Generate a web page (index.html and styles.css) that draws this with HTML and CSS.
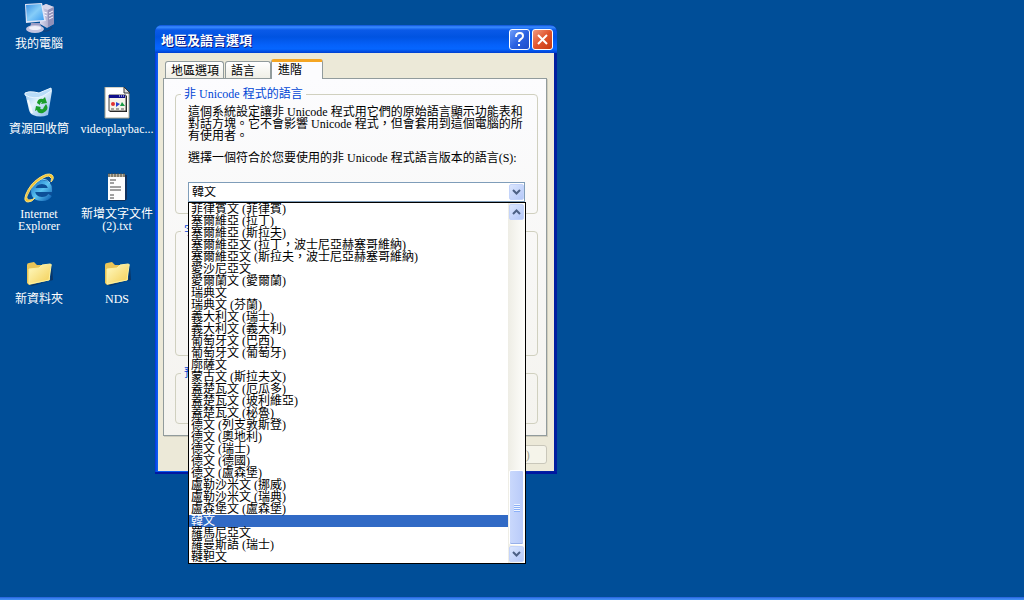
FILE: index.html
```html
<!DOCTYPE html>
<html lang="zh-Hant">
<head>
<meta charset="utf-8">
<title>地區及語言選項</title>
<link rel="stylesheet" href="styles.css">
</head>
<body>
<main class="desktop">
  <nav class="shortcuts" aria-label="桌面">
    <a class="shortcut" href="#computer">
      <svg class="shortcut-icon" viewBox="0 0 32 32" aria-hidden="true">
        <defs>
          <linearGradient id="screen" x1="0" y1="0" x2="1" y2="1"><stop offset="0" stop-color="#3a90e4"/><stop offset=".5" stop-color="#86cdf8"/><stop offset="1" stop-color="#3d9cf0"/></linearGradient>
          <linearGradient id="case" x1="0" y1="0" x2="1" y2="0"><stop offset="0" stop-color="#dcdcf0"/><stop offset="1" stop-color="#8c8cb4"/></linearGradient>
        </defs>
        <path d="M17 5l6-3 8 3v17l-7 4-7-4z" fill="url(#case)"/>
        <path d="M17 5l6-3 8 3-6 3z" fill="#d6d6ea"/>
        <path d="M25 8l6-3v17l-6 3z" fill="#9090b8"/>
        <path d="M21 10l3 1M21 13l3 1M26 11l4-2M26 14l4-2M26 17l4-2" stroke="#f4f4ff" stroke-width="1"/>
        <path d="M2 2l17-1 4 18-20 2z" fill="#dfe4f6"/>
        <path d="M3 3l15-1 3 16-17 1z" fill="url(#screen)"/>
        <path d="M8 21h9l2 6H7z" fill="#9c9cc4"/>
        <ellipse cx="12" cy="27" rx="9" ry="4" fill="#c4c4e0"/>
        <ellipse cx="12" cy="26" rx="6" ry="2" fill="#f0f0fa"/>
        <path d="M20 29q7 1 9-4" fill="none" stroke="#193d70"/>
      </svg>
      <span class="shortcut-label">我的電腦</span>
    </a>
    <a class="shortcut shortcut-newrow" href="#recycle">
      <svg class="shortcut-icon" viewBox="0 0 32 32" aria-hidden="true">
        <defs><linearGradient id="bin" x1="0" y1="0" x2="1" y2="1"><stop offset="0" stop-color="#8ac0f0"/><stop offset=".45" stop-color="#e2f2fd"/><stop offset="1" stop-color="#7fb3e4"/></linearGradient></defs>
        <path d="M2 6q10 4 18-1l8-4 1 3-4 24q-8 3-15 0-3-1-4-5z" fill="url(#bin)"/>
        <path d="M2 6q4-2 9-1l5 1 12-5v3l-8 5q-9 4-18-1z" fill="#b9dcf8" stroke="#e8f5ff" stroke-width="1"/>
        <path d="M5 13l4 13" stroke="#f4fbff" stroke-width="2"/>
        <path d="M14 16q1-5 6-4l2-2 2 6-6 1 1-2q-2 0-2 3zM23 17q3 4 0 7l-3 2v-4l1-2zM13 19l5 1-1 1q1 2 3 1v4q-5 1-6-3l-2 1z" fill="#1b9e2b"/>
      </svg>
      <span class="shortcut-label">資源回收筒</span>
    </a>
    <a class="shortcut" href="#video">
      <svg class="shortcut-icon" viewBox="0 0 32 32" aria-hidden="true">
        <path d="M4 0h19l5 5v26H4z" fill="#fff" stroke="#a9a48c"/>
        <path d="M23 0v6h6z" fill="#ddd" stroke="#333"/>
        <path d="M9 9h17v16H9z" fill="#111"/>
        <path d="M8 8h17v16H8z" fill="#f4f2e8" stroke="#444"/>
        <path d="M8 8h16v3H8z" fill="#10108c"/>
        <path d="M18 9h1M20 9h1M22 9h1" stroke="#fff"/>
        <circle cx="12" cy="17" r="2" fill="#e03030"/><path d="M15 15l4 2-4 3z" fill="#2a40d0"/><path d="M19 19l2-4 3 4z" fill="#169a43"/>
        <path d="M10 22h3M15 22h3M20 22h3" stroke="#555"/>
      </svg>
      <span class="shortcut-label">videoplaybac...</span>
    </a>
    <a class="shortcut shortcut-newrow" href="#ie">
      <svg class="shortcut-icon" viewBox="0 0 32 32" aria-hidden="true">
        <defs><linearGradient id="globe" x1="0" y1="0" x2="1" y2="1"><stop offset="0" stop-color="#1d78c8"/><stop offset=".5" stop-color="#5cc4f2"/><stop offset="1" stop-color="#1468b8"/></linearGradient></defs>
        <circle cx="18" cy="17" r="12" fill="#0c4f98"/>
        <path d="M12 18h15q0-8-8-8-8 0-9 8 0 9 9 9 6 0 8-4" fill="none" stroke="url(#globe)" stroke-width="4"/>
        <path d="M11 11q3-4 8-4 5 0 8 4" fill="none" stroke="#8fd4f6" stroke-width="1"/>
        <path d="M28 10q2-4-2-6-4 0-12 6Q6 17 4 24q-1 4 3 4 2 0 5-2-3 4-7 4-5 0-2-8Q7 12 16 6q9-6 13-3 3 3-1 7z" fill="#f4c42e" stroke="#fbe07a" stroke-width="1"/>
      </svg>
      <span class="shortcut-label">Internet<br>Explorer</span>
    </a>
    <a class="shortcut" href="#text">
      <svg class="shortcut-icon" viewBox="0 0 32 32" aria-hidden="true">
        <path d="M8 3h18v24l-2 2H8z" fill="#10305c"/>
        <path d="M7 3h17v25H7z" fill="#fdfdfd"/>
        <path d="M7 2h17v3H7z" fill="#bdb6a2"/>
        <path d="M8 1v4M11 1v4M14 1v4M17 1v4M20 1v4M23 1v4" stroke="#4b463d"/>
        <path d="M9 8h6M9 11h4M9 15h11M9 18h11M9 23h4M9 26h4" stroke="#444"/>
      </svg>
      <span class="shortcut-label">新增文字文件<br>(2).txt</span>
    </a>
    <a class="shortcut shortcut-newrow" href="#folder">
      <svg class="shortcut-icon" viewBox="0 0 32 32" aria-hidden="true">
        <defs><linearGradient id="folder" x1="0" y1="0" x2="1" y2="1"><stop offset="0" stop-color="#fffbc4"/><stop offset="1" stop-color="#f3cd52"/></linearGradient></defs>
        <path d="M7 28l20-4 2-15 1 14-21 6z" fill="#0b3565"/>
        <path d="M4 8q0-2 2-2l5-1 3 3h11q2 0 2 2v13L6 28 4 26z" fill="#e9c558"/>
        <path d="M6 12l10-1 3-3 8-1q2 0 1 2l-2 14-20 4z" fill="url(#folder)" stroke="#fdf2a0" stroke-width="1"/>
      </svg>
      <span class="shortcut-label">新資料夾</span>
    </a>
    <a class="shortcut" href="#nds">
      <svg class="shortcut-icon" viewBox="0 0 32 32" aria-hidden="true">
        <path d="M7 28l20-4 2-15 1 14-21 6z" fill="#0b3565"/>
        <path d="M4 8q0-2 2-2l5-1 3 3h11q2 0 2 2v13L6 28 4 26z" fill="#e9c558"/>
        <path d="M6 12l10-1 3-3 8-1q2 0 1 2l-2 14-20 4z" fill="url(#folder)" stroke="#fdf2a0" stroke-width="1"/>
      </svg>
      <span class="shortcut-label">NDS</span>
    </a>
  </nav>

  <section class="window" role="dialog" aria-labelledby="window-title">
    <header class="titlebar">
      <h1 class="title" id="window-title">地區及語言選項</h1>
      <button class="caption-button" type="button" aria-label="說明">
        <svg viewBox="0 0 19 19" aria-hidden="true"><path d="M6 7q0-4 4-4 3 0 3 3 0 2-2 3-2 1-2 3" fill="none" stroke="#fff" stroke-width="2"/><path d="M8 14h2v2H8z" fill="#fff"/></svg>
      </button>
      <button class="caption-button caption-close" type="button" aria-label="關閉">
        <svg viewBox="0 0 19 19" aria-hidden="true"><path d="M5 5l9 9M14 5l-9 9" stroke="#fff" stroke-width="2"/></svg>
      </button>
    </header>
    <div class="window-body">
      <div class="tabs" role="tablist">
        <button class="tab" type="button" role="tab" aria-selected="false">地區選項</button>
        <button class="tab tab-short" type="button" role="tab" aria-selected="false">語言</button>
        <button class="tab tab-active" type="button" role="tab" aria-selected="true">進階</button>
      </div>
      <div class="panel" role="tabpanel">
        <fieldset class="group">
          <legend class="legend">非 Unicode 程式的語言</legend>
          <p class="text">這個系統設定讓非 Unicode 程式用它們的原始語言顯示功能表和<br>對話方塊。它不會影響 Unicode 程式，但會套用到這個電腦的所<br>有使用者。</p>
          <label class="text combo-label" for="language">選擇一個符合於您要使用的非 Unicode 程式語言版本的語言(S):</label>
          <div class="combo">
            <select class="combo-select" id="language"><option>韓文</option></select>
            <span class="arrow-button combo-arrow"><svg viewBox="0 0 9 6" aria-hidden="true"><path d="M1 1l3.500 3.500L8 1"/></svg></span>
            <div class="popup">
              <ul class="options" role="listbox" aria-label="語言">
                <li role="option">菲律賓文 (菲律賓)</li>
                <li role="option">塞爾維亞 (拉丁)</li>
                <li role="option">塞爾維亞 (斯拉夫)</li>
                <li role="option">塞爾維亞文 (拉丁，波士尼亞赫塞哥維納)</li>
                <li role="option">塞爾維亞文 (斯拉夫，波士尼亞赫塞哥維納)</li>
                <li role="option">愛沙尼亞文</li>
                <li role="option">愛爾蘭文 (愛爾蘭)</li>
                <li role="option">瑞典文</li>
                <li role="option">瑞典文 (芬蘭)</li>
                <li role="option">義大利文 (瑞士)</li>
                <li role="option">義大利文 (義大利)</li>
                <li role="option">葡萄牙文 (巴西)</li>
                <li role="option">葡萄牙文 (葡萄牙)</li>
                <li role="option">廓薩文</li>
                <li role="option">蒙古文 (斯拉夫文)</li>
                <li role="option">蓋楚瓦文 (厄瓜多)</li>
                <li role="option">蓋楚瓦文 (玻利維亞)</li>
                <li role="option">蓋楚瓦文 (秘魯)</li>
                <li role="option">德文 (列支敦斯登)</li>
                <li role="option">德文 (奧地利)</li>
                <li role="option">德文 (瑞士)</li>
                <li role="option">德文 (德國)</li>
                <li role="option">德文 (盧森堡)</li>
                <li role="option">盧勒沙米文 (挪威)</li>
                <li role="option">盧勒沙米文 (瑞典)</li>
                <li role="option">盧森堡文 (盧森堡)</li>
                <li class="option-selected" role="option" aria-selected="true">韓文</li>
                <li role="option">羅馬尼亞文</li>
                <li role="option">羅曼斯語 (瑞士)</li>
                <li role="option">韃靼文</li>
              </ul>
              <div class="scrollbar">
                <button class="arrow-button" type="button" aria-label="向上"><svg viewBox="0 0 9 6" aria-hidden="true"><path d="M1 5l3.500-3.500L8 5"/></svg></button>
                <div class="track"><div class="thumb"><span class="grip"></span></div></div>
                <button class="arrow-button" type="button" aria-label="向下"><svg viewBox="0 0 9 6" aria-hidden="true"><path d="M1 1l3.500 3.500L8 1"/></svg></button>
              </div>
            </div>
          </div>
        </fieldset>
        <fieldset class="group group-tall"><legend class="legend">字</legend></fieldset>
        <fieldset class="group group-short"><legend class="legend">預</legend></fieldset>
      </div>
      <footer class="actions"><button class="apply" type="button" disabled>套用(A)</button></footer>
    </div>
  </section>
</main>
<div class="taskbar"></div>
</body>
</html>
```
FILE: styles.css
```css
* { box-sizing: border-box; }

body {
  margin: 0;
  min-height: 100vh;
  display: flex;
  flex-direction: column;
  background: #004e98;
  font: 12px/12px "Liberation Serif", "Noto Sans CJK TC", serif;
  color: #000;
}

button, select { font: inherit; color: inherit; }
svg { display: block; }

.desktop { flex: 1; position: relative; }

.shortcuts {
  display: grid;
  grid-template-columns: 78px 78px;
  grid-auto-rows: 85px;
  justify-content: start;
  padding-top: 2px;
}
.shortcut {
  display: flex;
  flex-direction: column;
  align-items: center;
  gap: 4px;
  color: #fff;
  text-align: center;
  text-decoration: none;
  white-space: nowrap;
}
.shortcut-newrow { grid-column: 1; }
.shortcut-icon { width: 32px; height: 32px; }

.window {
  position: absolute;
  left: 155px;
  top: 25px;
  width: 402px;
  padding: 0 3px 3px;
  border-radius: 7px 7px 0 0;
  background: linear-gradient(90deg, #0831d9, #0a5cf0 2px, #0a5cf0 50%, #001ea0 99%);
  box-shadow: inset 0 -2px #0018a0;
}
.titlebar {
  display: flex;
  align-items: center;
  gap: 2px;
  height: 28px;
  margin: 0 -3px;
  padding: 1px 4px 0 6px;
  border-radius: 7px 7px 0 0;
  background: linear-gradient(#0a50d8, #3a8cff 2px, #0a5ae8 5px, #0053e1 12px, #0561fa 20px, #0566ff 24px, #003fd0);
}
.title {
  flex: 1;
  margin: 0;
  font: bold 13px/16px "Noto Sans CJK TC", sans-serif;
  color: #fff;
  text-shadow: 1px 1px #0a1883;
}
.caption-button {
  width: 21px;
  height: 21px;
  padding: 0;
  border: 1px solid #fff;
  border-radius: 3px;
  background: linear-gradient(135deg, #6f9dfa, #2a62e2 50%, #1c4dc8);
}
.caption-close { background: linear-gradient(135deg, #f09a80, #e0532c 50%, #c63a12); }

.window-body { padding: 6px 7px 7px 5px; background: #ece9d8; }

.tabs {
  display: flex;
  align-items: flex-end;
  gap: 1px;
  padding-left: 2px;
}
.tab {
  width: 59px;
  height: 17px;
  padding: 2px 0 0 5px;
  border: 1px solid #919b9c;
  border-bottom: 0;
  border-radius: 3px 3px 0 0;
  background: linear-gradient(#fff, #f0efe6);
  text-align: left;
  white-space: nowrap;
}
.tab-short { width: 46px; }
.tab-active {
  position: relative;
  width: 52px;
  height: 20px;
  margin: 0 0 -1px -1px;
  padding: 0 0 2px 6px;
  border-top: 3px solid #f5a623;
  background: #fcfcfe;
}

.panel {
  display: flex;
  flex-direction: column;
  gap: 10px;
  padding: 8px 8px 11px 11px;
  border: 1px solid #919b9c;
  background: linear-gradient(#fcfcfe, #f4f3ee);
  box-shadow: 1px 1px #d0cdbd;
}
.group {
  min-width: 0;
  margin: 0;
  padding: 5px 12px 11px;
  border: 1px solid #d0d0bf;
  border-radius: 4px;
}
.group-tall { min-height: 132px; }
.group-short { min-height: 58px; }
.legend {
  margin-left: -7px;
  padding: 0 3px;
  line-height: 14px;
  color: #0046d5;
}
.text { display: block; margin: 0 0 10px; white-space: nowrap; }
.combo-label { margin-bottom: 18px; }

.combo { position: relative; display: flex; }
.combo-select {
  appearance: none;
  width: 100%;
  height: 20px;
  padding: 0 20px 0 3px;
  border: 1px solid #7f9db9;
  border-radius: 0;
  background: #fff;
}
.arrow-button {
  display: flex;
  align-items: center;
  justify-content: center;
  width: 15px;
  height: 16px;
  padding: 0;
  border: 1px solid #c4d4fa;
  border-radius: 2px;
  background: linear-gradient(135deg, #dbe6fe, #b4c8f8);
}
.arrow-button svg { width: 9px; height: 6px; fill: none; stroke: #4d6185; stroke-width: 2; }
.combo-arrow { position: absolute; right: 1px; top: 2px; pointer-events: none; }

.popup {
  position: absolute;
  z-index: 1;
  top: 100%;
  left: 0;
  right: -1px;
  display: flex;
  border: 1px solid #000;
  background: #fff;
}
.options { flex: 1; margin: 0; padding: 0; list-style: none; white-space: nowrap; }
.options li { height: 12px; padding-left: 2px; }
.options .option-selected { background: #316ac5; color: #fff; }
.scrollbar {
  display: flex;
  flex-direction: column;
  align-items: center;
  width: 17px;
  padding: 1px 0;
  background: linear-gradient(90deg, #eeede5, #fefefb);
}
.track { flex: 1; display: flex; flex-direction: column; justify-content: flex-end; padding-bottom: 1px; }
.thumb {
  display: flex;
  align-items: center;
  justify-content: center;
  width: 15px;
  height: 75px;
  border: 1px solid #fff;
  border-radius: 2px;
  background: linear-gradient(90deg, #c9d8fc, #b9cbf9);
  box-shadow: inset 0 -1px #98b0e8;
}
.grip { width: 6px; height: 8px; background: repeating-linear-gradient(#eef4fe 0 1px, #8cb0f8 1px 2px); }

.actions { display: flex; justify-content: flex-end; padding-top: 9px; }
.apply {
  width: 75px;
  height: 19px;
  padding: 0;
  border: 1px solid #c9c7ba;
  border-radius: 3px;
  background: #f5f4ea;
  color: #a1a192;
}

.taskbar { height: 3px; background: linear-gradient(#245edb, #3f8cf3 2px); }
```
